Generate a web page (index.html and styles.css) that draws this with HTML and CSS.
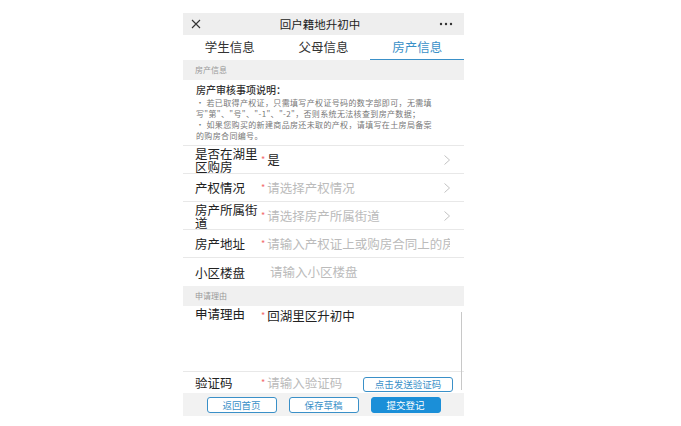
FILE: index.html
```html
<!DOCTYPE html>
<html lang="zh-CN">
<head>
  <meta charset="UTF-8" />
  <title>回户籍地升初中</title>
  <meta name="viewport" content="width=device-width, initial-scale=1.0"/>
  <link rel="stylesheet" href="styles.css">
</head>
<body>

  <div class="phone">
    <!-- 顶部标题栏 -->
    <div class="topbar">
      <svg class="close-icon" width="10" height="10" viewBox="0 0 10 10">
        <path d="M1 1 L9 9 M9 1 L1 9" stroke="#333" stroke-width="1.1" fill="none"/>
      </svg>
      <div class="title">回户籍地升初中</div>
      <svg class="more-icon" width="14" height="4" viewBox="0 0 14 4">
        <circle cx="2" cy="2" r="1.2" fill="#333"/>
        <circle cx="7" cy="2" r="1.2" fill="#333"/>
        <circle cx="12" cy="2" r="1.2" fill="#333"/>
      </svg>
    </div>

    <div class="scroll">
      <div class="tabs">
        <div class="tab">学生信息</div>
        <div class="tab">父母信息</div>
        <div class="tab active">房产信息</div>
      </div>

      <div class="band">房产信息</div>

      <div class="notice">
        <h4>房产审核事项说明：</h4>
        <p>• 若已取得产权证，只需填写产权证号码的数字部即可，无需填<br>写"第"、"号"、"-1"、"-2"，否则系统无法核查到房产数据；</p>
        <p>• 如果您购买的新建商品房还未取的产权，请填写在土房局备案<br>的购房合同编号。</p>
      </div>

      <div class="form-row">
        <div class="label">是否在湖里区购房</div>
        <div class="value"><span class="req">*</span>是</div>
        <svg class="arrow" width="6" height="10" viewBox="0 0 6 10"><path d="M0.5 0.5 L5.5 5 L0.5 9.5" stroke="#bbb" stroke-width="0.9" fill="none"/></svg>
      </div>
      <div class="form-row">
        <div class="label">产权情况</div>
        <div class="value empty"><span class="req">*</span>请选择产权情况</div>
        <svg class="arrow" width="6" height="10" viewBox="0 0 6 10"><path d="M0.5 0.5 L5.5 5 L0.5 9.5" stroke="#bbb" stroke-width="0.9" fill="none"/></svg>
      </div>
      <div class="form-row">
        <div class="label">房产所属街道</div>
        <div class="value empty"><span class="req">*</span>请选择房产所属街道</div>
        <svg class="arrow" width="6" height="10" viewBox="0 0 6 10"><path d="M0.5 0.5 L5.5 5 L0.5 9.5" stroke="#bbb" stroke-width="0.9" fill="none"/></svg>
      </div>
      <div class="form-row">
        <div class="label">房产地址</div>
        <div class="value empty"><span class="req">*</span>请输入产权证上或购房合同上的房</div>
      </div>
      <div class="form-row last">
        <div class="label">小区楼盘</div>
        <div class="value empty no-req">请输入小区楼盘</div>
      </div>

      <div class="band">申请理由</div>

      <div class="form-row reason">
        <div class="label">申请理由</div>
        <div class="value"><span class="req">*</span>回湖里区升初中</div>
      </div>
      <div class="form-row code">
        <div class="label">验证码</div>
        <div class="value empty"><span class="req">*</span>请输入验证码</div>
        <button class="btn code-btn">点击发送验证码</button>
      </div>

      <div class="scroll-thumb"></div>
    </div>

    <!-- 底部操作栏 -->
    <div class="footer-bar">
      <button class="btn">返回首页</button>
      <button class="btn">保存草稿</button>
      <button class="btn primary">提交登记</button>
    </div>
  </div>

</body>
</html>
```

FILE: styles.css
```css
body {
  margin: 0;
  background: #fff;
  font-family: "Noto Sans CJK SC", "Noto Sans", sans-serif;
  color: #222;
}
.phone {
  margin: 13px 0 0 183px;
  width: 281px;
  height: 403px;
  display: flex;
  flex-direction: column;
  background: #fff;
}
.topbar {
  height: 22px;
  flex: none;
  background: #eeeeee;
  display: flex;
  align-items: center;
  justify-content: space-between;
  padding: 0 11px 0 8px;
}
.title {
  font-size: 11.5px;
  color: #222;
}
.scroll {
  flex: 1;
  overflow: hidden;
  position: relative;
}
.tabs {
  display: flex;
  height: 25px;
}
.tab {
  flex: 1;
  text-align: center;
  font-size: 12.5px;
  line-height: 24px;
  color: #333;
  border-bottom: 1px solid transparent;
}
.tab.active {
  color: #3a90c8;
  border-bottom-color: #3a90c8;
}
.band {
  height: 20px;
  line-height: 20px;
  background: #f0f0f0;
  padding-left: 12px;
  font-size: 8px;
  color: #999;
}
.notice {
  height: 66px;
  padding: 3px 0 0 13px;
  box-sizing: border-box;
  border-bottom: 1px solid #e8e8e8;
}
.notice h4 {
  margin: 0;
  font-size: 10px;
  font-weight: 500;
  line-height: 14px;
  color: #333;
}
.notice p {
  margin: 0;
  font-size: 8px;
  line-height: 11px;
  color: #777;
  letter-spacing: 0.35px;
  white-space: nowrap;
}
.form-row {
  height: 28px;
  box-sizing: border-box;
  display: flex;
  align-items: center;
  padding: 0 14px 0 12px;
  border-bottom: 1px solid #e8e8e8;
}
.form-row.last { border-bottom: none; }
.label {
  width: 66px;
  flex: none;
  font-size: 12.5px;
  line-height: 13px;
  color: #222;
}
.value {
  flex: 1;
  font-size: 12.5px;
  line-height: 18px;
  color: #222;
  white-space: nowrap;
  overflow: hidden;
}
.value.empty { color: #bbb; }
.value.no-req { padding-left: 9px; }
.req {
  color: #f26b6b;
  font-size: 9px;
  vertical-align: 2px;
  margin-right: 2px;
}
.arrow { flex: none; }
.form-row.reason {
  height: 66px;
  align-items: flex-start;
  padding-top: 1px;
}
.form-row.code {
  height: 21px;
  align-items: center;
  padding-right: 11px;
  border-bottom: none;
}
.form-row.code .label {
  line-height: 16px;
}
.btn {
  width: 70px;
  height: 16px;
  padding: 0;
  border: 1px solid #3a90c8;
  border-radius: 3px;
  background: #fff;
  color: #3a90c8;
  font-family: inherit;
  font-size: 9.5px;
  line-height: 14px;
}
.btn.primary {
  background: #1b8fd8;
  border-color: #1b8fd8;
  color: #fff;
}
.code-btn {
  width: 90px;
  height: 15px;
  line-height: 13px;
  flex: none;
  align-self: flex-end;
  margin-bottom: 1px;
}
.scroll-thumb {
  position: absolute;
  right: 2px;
  top: 277px;
  width: 1px;
  height: 78px;
  background: #c8c8c8;
}
.footer-bar {
  height: 23px;
  flex: none;
  background: #f2f2f2;
  display: flex;
  justify-content: center;
  align-items: center;
  gap: 12px;
}
```
